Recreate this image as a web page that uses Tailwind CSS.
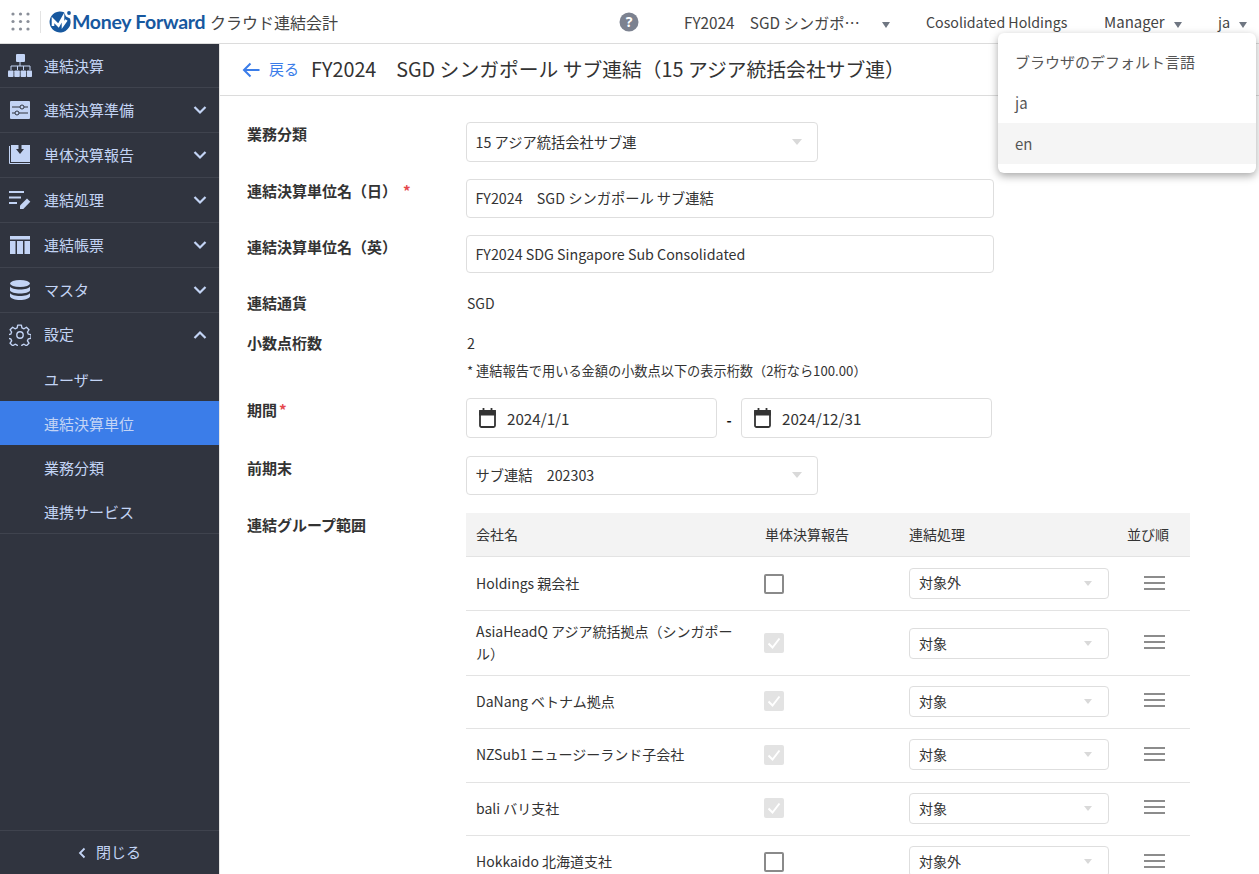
<!DOCTYPE html>
<html lang="ja">
<head>
<meta charset="utf-8">
<script src="https://cdn.jsdelivr.net/npm/@tailwindcss/browser@4"></script>
</head>
<body class="w-[1259px] h-[874px] overflow-hidden bg-white font-['Noto_Sans_CJK_JP','Noto_Sans',sans-serif] text-[#333] relative">
<header class="h-[44px] border-b border-[#dcdcdc] flex items-center relative">
  <svg class="ml-[11px] w-[19px] h-[19px]" viewBox="0 0 19 19" fill="#8a8f99"><circle cx="2" cy="2" r="1.6"/><circle cx="9.5" cy="2" r="1.6"/><circle cx="17" cy="2" r="1.6"/><circle cx="2" cy="9.5" r="1.6"/><circle cx="9.5" cy="9.5" r="1.6"/><circle cx="17" cy="9.5" r="1.6"/><circle cx="2" cy="17" r="1.6"/><circle cx="9.5" cy="17" r="1.6"/><circle cx="17" cy="17" r="1.6"/></svg>
  <div class="ml-[10px] w-px h-[22px] bg-[#e3e3e3]"></div>
  <svg class="ml-[8px] w-[23px] h-[23px]" viewBox="0 0 23 23"><path d="M21 8.500A10.500 10.500 0 1 1 15 2.200L17 6.500z" fill="#17589f"/><path d="M4 16V10l5.500 5.500 4.500-8v7.500l3.500-5" fill="none" stroke="#fff" stroke-width="2.600"/><circle cx="20" cy="3" r="1.900" fill="#17589f"/></svg>
  <span class="font-['Lato',sans-serif] font-bold text-[19.5px] leading-none text-[#17589f] tracking-[-0.3px] w-[138px] whitespace-nowrap">Money Forward</span>
  <span class="text-[16px] text-[#444] whitespace-nowrap">クラウド連結会計</span>
  <svg class="absolute left-[619px] top-[12px] w-[20px] h-[20px]" viewBox="0 0 20 20"><circle cx="10" cy="10" r="9.500" fill="#7c8290"/><text x="10" y="15" font-size="14" font-weight="700" text-anchor="middle" fill="#fff" font-family="Noto Sans">?</text></svg>
  <div class="absolute left-[684px] top-[12px] text-[15.3px] leading-[20px] text-[#444] whitespace-nowrap">FY2024　SGD シンガポ…</div>
  <div class="absolute left-[882px] top-[22px] w-0 h-0 border-x-[4.5px] border-x-transparent border-t-[6px] border-t-[#6f7682]"></div>
  <div class="absolute left-[926px] top-[12px] text-[14.2px] leading-[20px] text-[#444] whitespace-nowrap">Cosolidated Holdings</div>
  <div class="absolute left-[1104px] top-[12px] text-[15px] leading-[20px] text-[#444] whitespace-nowrap">Manager</div>
  <div class="absolute left-[1174px] top-[22px] w-0 h-0 border-x-[4.5px] border-x-transparent border-t-[6px] border-t-[#6f7682]"></div>
  <div class="absolute left-[1218px] top-[12px] text-[14.5px] leading-[20px] text-[#444] whitespace-nowrap">ja</div>
  <div class="absolute left-[1239px] top-[22px] w-0 h-0 border-x-[4.5px] border-x-transparent border-t-[6px] border-t-[#6f7682]"></div>
</header>
<div class="flex h-[830px]">
  <aside class="w-[219px] shrink-0 bg-[#30343f] text-[#c3d4f5] text-[15px] flex flex-col">
    <div class="h-[44px] flex items-center border-b border-[#3f434e]">
      <svg class="ml-[8px] w-[24px] h-[24px]" viewBox="0 0 24 24" fill="#c3d4f5"><rect x="8" y="0" width="9" height="8" rx="1"/><path d="M12 8v4M3 16v-4h19v4M9.500 16v-4M15.500 16v-4" stroke="#c3d4f5" stroke-width="1" fill="none"/><rect x="0" y="16.500" width="5.500" height="6.500" rx=".8"/><rect x="6.300" y="16.500" width="5.500" height="6.500" rx=".8"/><rect x="12.600" y="16.500" width="5.500" height="6.500" rx=".8"/><rect x="18.900" y="16.500" width="5.100" height="6.500" rx=".8"/></svg>
      <span class="ml-[12px] pt-px">連結決算</span>
    </div>
    <div class="h-[45px] flex items-center border-b border-[#3f434e]">
      <svg class="ml-[10px] w-[20px] h-[18px]" viewBox="0 0 20 18"><rect width="20" height="18" rx="1" fill="#c3d4f5"/><path d="M2 6h8M14 6h4M2 12h3M9 12h9" stroke="#30343f" stroke-width="1"/><circle cx="12" cy="6" r="2" fill="none" stroke="#30343f"/><circle cx="7" cy="12" r="2" fill="none" stroke="#30343f"/></svg>
      <span class="ml-[14px]">連結決算準備</span>
      <svg class="ml-auto mr-[12px] w-[14px] h-[10px]" viewBox="0 0 14 10" fill="none" stroke="#c3d4f5" stroke-width="2.200"><path d="M1.500 2 7 7.500 12.500 2"/></svg>
    </div>
    <div class="h-[45px] flex items-center border-b border-[#3f434e]">
      <svg class="ml-[9px] w-[22px] h-[20px]" viewBox="0 0 22 20"><path d="M0.500 1v17.500H21" fill="none" stroke="#c3d4f5" stroke-width="1"/><rect x="2" y="0" width="19" height="17" fill="#c3d4f5"/><path d="M9.500 0h3v4H15L11 9 7 4h2.500z" fill="#30343f"/></svg>
      <span class="ml-[13px]">単体決算報告</span>
      <svg class="ml-auto mr-[12px] w-[14px] h-[10px]" viewBox="0 0 14 10" fill="none" stroke="#c3d4f5" stroke-width="2.200"><path d="M1.500 2 7 7.500 12.500 2"/></svg>
    </div>
    <div class="h-[45px] flex items-center border-b border-[#3f434e]">
      <svg class="ml-[9px] w-[23px] h-[20px]" viewBox="0 0 23 20"><path d="M0 2h15M0 7.500h12M0 13h8" stroke="#c3d4f5" stroke-width="1.800"/><path d="M11 19v-3.500l7-7 3.300 3.300-7 7.200z" fill="#c3d4f5"/></svg>
      <span class="ml-[12px]">連結処理</span>
      <svg class="ml-auto mr-[12px] w-[14px] h-[10px]" viewBox="0 0 14 10" fill="none" stroke="#c3d4f5" stroke-width="2.200"><path d="M1.500 2 7 7.500 12.500 2"/></svg>
    </div>
    <div class="h-[45px] flex items-center border-b border-[#3f434e]">
      <svg class="ml-[10px] w-[20px] h-[18px]" viewBox="0 0 20 18" fill="#c3d4f5"><rect width="20" height="3.500"/><rect y="5" width="5.500" height="13"/><rect x="7" y="5" width="6" height="13"/><rect x="14.500" y="5" width="5.500" height="13"/></svg>
      <span class="ml-[14px]">連結帳票</span>
      <svg class="ml-auto mr-[12px] w-[14px] h-[10px]" viewBox="0 0 14 10" fill="none" stroke="#c3d4f5" stroke-width="2.200"><path d="M1.500 2 7 7.500 12.500 2"/></svg>
    </div>
    <div class="h-[45px] flex items-center border-b border-[#3f434e]">
      <svg class="ml-[10px] w-[20px] h-[20px]" viewBox="0 0 20 20" fill="#c3d4f5"><ellipse cx="10" cy="3.500" rx="10" ry="3.500"/><path d="M0 6.500c1 2 5 3 10 3s9-1 10-3v4c-1 2-5 3-10 3s-9-1-10-3z"/><path d="M0 13c1 2 5 3 10 3s9-1 10-3v3.500c-1 2-5 3.500-10 3.500s-9-1.500-10-3.500z"/></svg>
      <span class="ml-[14px]">マスタ</span>
      <svg class="ml-auto mr-[12px] w-[14px] h-[10px]" viewBox="0 0 14 10" fill="none" stroke="#c3d4f5" stroke-width="2.200"><path d="M1.500 2 7 7.500 12.500 2"/></svg>
    </div>
    <div class="h-[44px] flex items-center">
      <svg class="ml-[9px] w-[22px] h-[22px]" viewBox="0 0 24 24" fill="none" stroke="#c3d4f5" stroke-width="1.500" stroke-linejoin="round"><path d="M10 1.500h4l.6 3 2.300 1 2.600-1.700 2.800 2.800-1.700 2.600 1 2.300 3 .6v4l-3 .6-1 2.300 1.700 2.600-2.800 2.800-2.600-1.700-2.300 1-.6 3h-4l-.6-3-2.300-1-2.600 1.700-2.800-2.800 1.700-2.600-1-2.300-3-.6v-4l3-.6 1-2.300L1.700 6.600l2.800-2.800 2.600 1.700 2.300-1z" transform="translate(-0.500 -0.200) scale(1 .98)"/><circle cx="12" cy="12" r="3.500"/></svg>
      <span class="ml-[13px] pb-px">設定</span>
      <svg class="ml-auto mr-[12px] w-[14px] h-[10px]" viewBox="0 0 14 10" fill="none" stroke="#c3d4f5" stroke-width="2.200"><path d="M1.500 8 7 2.500 12.500 8"/></svg>
    </div>
    <div class="h-[44px] flex items-center pl-[44px] pt-[2px]">ユーザー</div>
    <div class="h-[44px] flex items-center pl-[44px] pt-[2px] bg-[#3b7de9]">連結決算単位</div>
    <div class="h-[44px] flex items-center pl-[44px] pt-[2px]">業務分類</div>
    <div class="h-[45px] flex items-center pl-[44px] pt-[2px] border-b border-[#3f434e]">連携サービス</div>
    <div class="mt-auto h-[44px] border-t border-[#3f434e] flex items-center justify-center gap-[10px]">
      <svg class="w-[8px] h-[12px]" viewBox="0 0 8 12" fill="none" stroke="#c3d4f5" stroke-width="1.800"><path d="M6.500 1.500 2 6l4.500 4.500"/></svg>
      <span>閉じる</span>
    </div>
  </aside>
  <main class="flex-1 min-w-0 border-l border-[#e6e6e6] overflow-hidden">
    <div class="h-[52px] border-b border-[#dcdcdc] flex items-center pl-[22px]">
      <svg class="w-[18px] h-[16px]" viewBox="0 0 18 16" fill="none" stroke="#3b7de9" stroke-width="2"><path d="M17.500 8H2M8.500 1.500 2 8l6.500 6.500"/></svg>
      <span class="ml-[9px] text-[15px] text-[#3b7de9]">戻る</span>
      <span class="ml-[12px] pb-[2px] text-[19.8px] text-[#333] whitespace-nowrap">FY2024　SGD シンガポール サブ連結（15 アジア統括会社サブ連）</span>
    </div>
    <div class="pl-[27px] text-[14.25px]">
      <div class="flex pt-[26px] h-[83px]">
        <div class="w-[219px] text-[15px] font-bold leading-[24px]">業務分類</div>
        <div class="w-[352px] h-[40px] border border-[#dedede] rounded-[4px] flex items-center px-[8.5px]"><span>15 アジア統括会社サブ連</span><i class="ml-auto mr-[6.5px] w-0 h-0 border-x-[5px] border-x-transparent border-t-[6px] border-t-[#d9d9d9]"></i></div>
      </div>
      <div class="flex h-[56px]">
        <div class="w-[219px] text-[15px] font-bold leading-[24px]">連結決算単位名（日）<span class="text-[#e5484d] ml-[6px]">*</span></div>
        <div class="w-[528px] h-[39px] border border-[#dedede] rounded-[4px] flex items-center px-[8.5px] pb-[2px]">FY2024　SGD シンガポール サブ連結</div>
      </div>
      <div class="flex h-[56px]">
        <div class="w-[219px] text-[15px] font-bold leading-[24px]">連結決算単位名（英）</div>
        <div class="w-[528px] h-[38px] border border-[#dedede] rounded-[4px] flex items-center px-[8.5px]">FY2024 SDG Singapore Sub Consolidated</div>
      </div>
      <div class="flex h-[40px] items-start">
        <div class="w-[219px] text-[15px] font-bold leading-[24px]">連結通貨</div>
        <div class="leading-[24px] text-[14px] ml-px">SGD</div>
      </div>
      <div class="flex h-[67px] items-start">
        <div class="w-[219px] text-[15px] font-bold leading-[24px]">小数点桁数</div>
        <div>
          <div class="leading-[24px] ml-px">2</div>
          <div class="mt-[7px] ml-px text-[13.2px] leading-[18px] whitespace-nowrap">* 連結報告で用いる金額の小数点以下の表示桁数（2桁なら100.00）</div>
        </div>
      </div>
      <div class="flex h-[58px]">
        <div class="w-[219px] text-[15px] font-bold leading-[24px]">期間<span class="text-[#e5484d] ml-[2px]">*</span></div>
        <div class="w-[251px] h-[40px] border border-[#dedede] rounded-[4px] flex items-center pl-[12px] text-[15.2px]">
          <svg class="w-[17px] h-[20px]" viewBox="0 0 17 20" fill="none" stroke="#333" stroke-width="1.800"><rect x="1" y="3" width="15" height="16" rx="1.500"/><path d="M1 3h15v3.500H1z" fill="#333"/><path d="M4.500 0v3M12.500 0v3"/></svg>
          <span class="ml-[11px]">2024/1/1</span>
        </div>
        <div class="w-[24px] text-center font-bold text-[#111] text-[14px] leading-[44px]">-</div>
        <div class="w-[251px] h-[40px] border border-[#dedede] rounded-[4px] flex items-center pl-[12px] text-[15.2px]">
          <svg class="w-[17px] h-[20px]" viewBox="0 0 17 20" fill="none" stroke="#333" stroke-width="1.800"><rect x="1" y="3" width="15" height="16" rx="1.500"/><path d="M1 3h15v3.500H1z" fill="#333"/><path d="M4.500 0v3M12.500 0v3"/></svg>
          <span class="ml-[11px]">2024/12/31</span>
        </div>
      </div>
      <div class="flex h-[57px]">
        <div class="w-[219px] text-[15px] font-bold leading-[24px]">前期末</div>
        <div class="w-[352px] h-[39px] border border-[#dedede] rounded-[4px] flex items-center px-[8.5px] pb-[2px]"><span>サブ連結　202303</span><i class="ml-auto mr-[6.5px] w-0 h-0 border-x-[5px] border-x-transparent border-t-[6px] border-t-[#d9d9d9]"></i></div>
      </div>
      <div class="flex text-[14px]">
        <div class="w-[219px] text-[15px] font-bold leading-[24px]">連結グループ範囲</div>
        <div class="w-[724px]">
          <div class="h-[44px] bg-[#f3f3f3] border-b border-[#e3e3e3] grid grid-cols-[289px_144px_200px_80px] items-center pl-[10px] text-[14px]">
            <span>会社名</span><span>単体決算報告</span><span>連結処理</span><span class="pl-[18px]">並び順</span>
          </div>
          <div class="h-[54px] border-b border-[#e3e3e3] grid grid-cols-[288px_145px_200px_80px] items-center pl-[10px]">
            <span>Holdings 親会社</span>
            <span class="w-[20px] h-[20px] border-2 border-[#8a8a8a] rounded-[2px]"></span>
            <div class="h-[31px] w-[200px] border border-[#dedede] rounded-[4px] flex items-center px-[9px]"><span class="pb-[2px]">対象外</span><i class="ml-auto mr-[7px] w-0 h-0 border-x-[4px] border-x-transparent border-t-[5px] border-t-[#d9d9d9]"></i></div>
            <svg class="ml-[35px] mb-[2px] w-[21px] h-[14px]" viewBox="0 0 21 14" fill="#8c8c8c"><rect width="21" height="2"/><rect y="6" width="21" height="2"/><rect y="12" width="21" height="2"/></svg>
          </div>
          <div class="h-[65px] border-b border-[#e3e3e3] grid grid-cols-[288px_145px_200px_80px] items-center pl-[10px]">
            <span class="w-[270px] leading-[22px] mb-[2px]">AsiaHeadQ アジア統括拠点（シンガポール）</span>
            <span class="w-[20px] h-[20px] bg-[#e3e3e3] rounded-[2px] flex items-center justify-center"><svg class="w-[16px] h-[16px]" viewBox="0 0 16 16" fill="none" stroke="#fff" stroke-width="2"><path d="M2.500 8.500 6.500 12.500 13.500 3.500"/></svg></span>
            <div class="h-[31px] w-[200px] border border-[#dedede] rounded-[4px] flex items-center px-[9px]"><span>対象</span><i class="ml-auto mr-[7px] w-0 h-0 border-x-[4px] border-x-transparent border-t-[5px] border-t-[#d9d9d9]"></i></div>
            <svg class="ml-[35px] mb-[2px] w-[21px] h-[14px]" viewBox="0 0 21 14" fill="#8c8c8c"><rect width="21" height="2"/><rect y="6" width="21" height="2"/><rect y="12" width="21" height="2"/></svg>
          </div>
          <div class="h-[53px] pb-[2px] border-b border-[#e3e3e3] grid grid-cols-[288px_145px_200px_80px] items-center pl-[10px]">
            <span>DaNang ベトナム拠点</span>
            <span class="w-[20px] h-[20px] bg-[#e3e3e3] rounded-[2px] flex items-center justify-center"><svg class="w-[16px] h-[16px]" viewBox="0 0 16 16" fill="none" stroke="#fff" stroke-width="2"><path d="M2.500 8.500 6.500 12.500 13.500 3.500"/></svg></span>
            <div class="h-[31px] w-[200px] border border-[#dedede] rounded-[4px] flex items-center px-[9px]"><span>対象</span><i class="ml-auto mr-[7px] w-0 h-0 border-x-[4px] border-x-transparent border-t-[5px] border-t-[#d9d9d9]"></i></div>
            <svg class="ml-[35px] mb-[2px] w-[21px] h-[14px]" viewBox="0 0 21 14" fill="#8c8c8c"><rect width="21" height="2"/><rect y="6" width="21" height="2"/><rect y="12" width="21" height="2"/></svg>
          </div>
          <div class="h-[54px] pb-[2px] border-b border-[#e3e3e3] grid grid-cols-[288px_145px_200px_80px] items-center pl-[10px]">
            <span>NZSub1 ニュージーランド子会社</span>
            <span class="w-[20px] h-[20px] bg-[#e3e3e3] rounded-[2px] flex items-center justify-center"><svg class="w-[16px] h-[16px]" viewBox="0 0 16 16" fill="none" stroke="#fff" stroke-width="2"><path d="M2.500 8.500 6.500 12.500 13.500 3.500"/></svg></span>
            <div class="h-[31px] w-[200px] border border-[#dedede] rounded-[4px] flex items-center px-[9px]"><span>対象</span><i class="ml-auto mr-[7px] w-0 h-0 border-x-[4px] border-x-transparent border-t-[5px] border-t-[#d9d9d9]"></i></div>
            <svg class="ml-[35px] mb-[2px] w-[21px] h-[14px]" viewBox="0 0 21 14" fill="#8c8c8c"><rect width="21" height="2"/><rect y="6" width="21" height="2"/><rect y="12" width="21" height="2"/></svg>
          </div>
          <div class="h-[53px] pb-[2px] border-b border-[#e3e3e3] grid grid-cols-[288px_145px_200px_80px] items-center pl-[10px]">
            <span>bali バリ支社</span>
            <span class="w-[20px] h-[20px] bg-[#e3e3e3] rounded-[2px] flex items-center justify-center"><svg class="w-[16px] h-[16px]" viewBox="0 0 16 16" fill="none" stroke="#fff" stroke-width="2"><path d="M2.500 8.500 6.500 12.500 13.500 3.500"/></svg></span>
            <div class="h-[31px] w-[200px] border border-[#dedede] rounded-[4px] flex items-center px-[9px]"><span>対象</span><i class="ml-auto mr-[7px] w-0 h-0 border-x-[4px] border-x-transparent border-t-[5px] border-t-[#d9d9d9]"></i></div>
            <svg class="ml-[35px] mb-[2px] w-[21px] h-[14px]" viewBox="0 0 21 14" fill="#8c8c8c"><rect width="21" height="2"/><rect y="6" width="21" height="2"/><rect y="12" width="21" height="2"/></svg>
          </div>
          <div class="h-[52px] pb-[2px] grid grid-cols-[288px_145px_200px_80px] items-center pl-[10px]">
            <span>Hokkaido 北海道支社</span>
            <span class="w-[20px] h-[20px] border-2 border-[#8a8a8a] rounded-[2px] mt-[2px]"></span>
            <div class="h-[31px] w-[200px] border border-[#dedede] rounded-[4px] flex items-center px-[9px]"><span>対象外</span><i class="ml-auto mr-[7px] w-0 h-0 border-x-[4px] border-x-transparent border-t-[5px] border-t-[#d9d9d9]"></i></div>
            <svg class="ml-[35px] w-[21px] h-[14px]" viewBox="0 0 21 14" fill="#8c8c8c"><rect width="21" height="2"/><rect y="6" width="21" height="2"/><rect y="12" width="21" height="2"/></svg>
          </div>
        </div>
      </div>
    </div>
  </main>
</div>
<div class="absolute left-[998px] top-[33px] w-[258px] h-[140px] bg-white rounded-[6px] shadow-[0_3px_8px_rgba(0,0,0,0.35)] pt-[9px] text-[15px] text-[#555]">
  <div class="h-[41px] flex items-center pl-[17px]">ブラウザのデフォルト言語</div>
  <div class="h-[40px] flex items-center pl-[17px]">ja</div>
  <div class="h-[41px] flex items-center pl-[17px] pt-[2px] bg-[#f5f5f5]">en</div>
</div>
</body>
</html>
